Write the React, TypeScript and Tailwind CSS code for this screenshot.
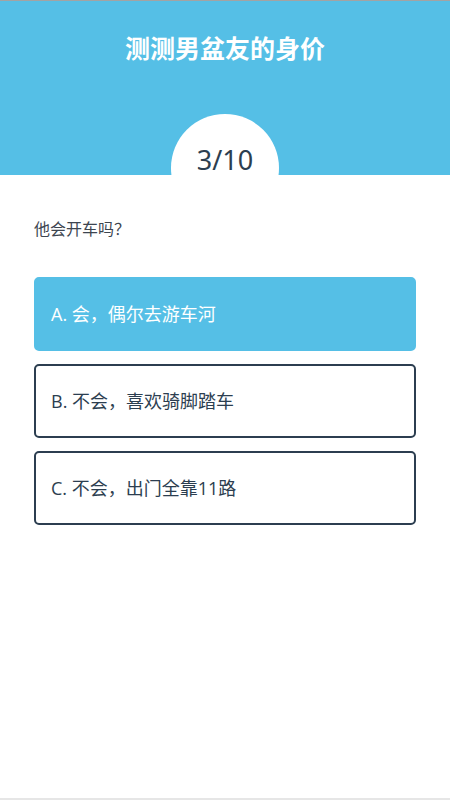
import React from "react";

const font = { fontFamily: '"Open Sans", "Noto Sans CJK SC", sans-serif' };

export default function App() {
  const options = ["A. 会，偶尔去游车河", "B. 不会，喜欢骑脚踏车", "C. 不会，出门全靠11路"];
  return (
    <div className="w-[450px] h-[800px] bg-white flex flex-col border-t border-t-[#a3a3a3] border-b-2 border-b-[#e6e6e6] overflow-hidden" style={font}>
      <div className="h-[174px] bg-[#55bfe6] flex flex-col items-center overflow-hidden">
        <h1 className="mt-[30px] text-[25px] leading-[34px] font-bold text-white">测测男盆友的身价</h1>
        <div className="mt-[49px] w-[108px] h-[108px] rounded-full bg-white flex justify-center shrink-0">
          <span className="mt-[31px] text-[27px] leading-[30px] text-[#2c3e50]" style={{ fontFamily: '"Noto Sans", sans-serif' }}>3/10</span>
        </div>
      </div>
      <div className="px-[34px]">
        <p className="mt-[42px] text-[16px] leading-[24px] text-[#3d4550]">他会开车吗？</p>
        <div className="mt-[36px] flex flex-col gap-[13px]">
          {options.map((o, i) => (
            <div
              key={o}
              className={
                i === 0
                  ? "h-[74px] rounded-[5px] bg-[#55bfe6] border-2 border-[#55bfe6] flex items-center px-[15px] text-[18px] text-white"
                  : "h-[74px] rounded-[5px] bg-white border-2 border-[#2c3e50] flex items-center px-[15px] text-[18px] text-[#2c3e50]"
              }
            >
              {o}
            </div>
          ))}
        </div>
      </div>
    </div>
  );
}
